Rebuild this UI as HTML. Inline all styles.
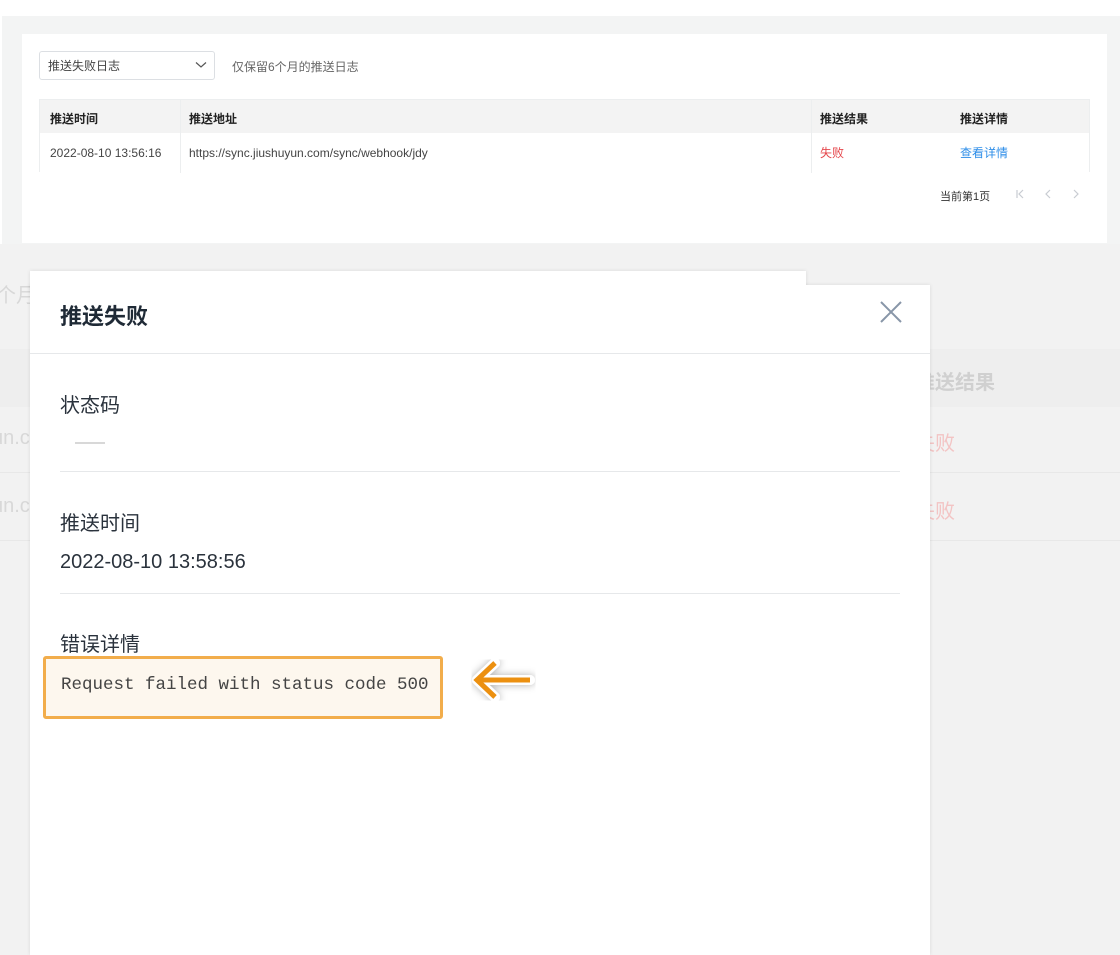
<!DOCTYPE html>
<html><head><meta charset="utf-8"><style>
*{margin:0;padding:0;box-sizing:border-box}
body{width:1120px;height:945px;overflow:hidden;background:#f2f2f2;font-family:"Liberation Sans","Noto Sans CJK SC",sans-serif;position:relative}
.abs{position:absolute}
</style></head><body>
<div class="abs" style="left:0;top:0;width:1120px;height:16px;background:#fff"></div>
<div class="abs" style="left:0;top:16px;width:1120px;height:228px;background:#f3f4f4"></div>
<div class="abs" style="left:0;top:16px;width:2px;height:228px;background:#fff"></div>
<div class="abs" style="left:22px;top:34px;width:1085px;height:209px;background:#fff"></div>
<div class="abs" style="left:39px;top:51px;width:176px;height:29px;border:1px solid #dcdfe3;border-radius:3px;font-size:12px;color:#444;padding:6px 8px;line-height:16px">推送失败日志
<svg class="abs" style="left:155px;top:9px" width="12" height="8"><path d="M1 1.5 6 6 11 1.5" stroke="#555" fill="none" stroke-width="1.2"/></svg></div>
<div class="abs" style="left:232px;top:58px;font-size:12px;color:#666">仅保留6个月的推送日志</div>
<div class="abs" style="left:39px;top:99px;width:1051px;height:73px;border:1px solid #eceeef;border-bottom:none">
 <div style="height:33px;background:#f3f3f3;position:relative;font-size:12px;font-weight:bold;color:#222">
  <span class="abs" style="left:10px;top:10px">推送时间</span><span class="abs" style="left:149px;top:10px">推送地址</span><span class="abs" style="left:780px;top:10px">推送结果</span><span class="abs" style="left:920px;top:10px">推送详情</span>
 </div>
 <div style="position:relative;font-size:12px;color:#444;height:39px;line-height:14px">
  <span class="abs" style="left:10px;top:13px">2022-08-10 13:56:16</span><span class="abs" style="left:149px;top:13px">https://sync.jiushuyun.com/sync/webhook/jdy</span><span class="abs" style="left:780px;top:13px;color:#e5484d">失败</span><span class="abs" style="left:920px;top:13px;color:#2e8ee8">查看详情</span>
 </div>
 <div class="abs" style="left:140px;top:0;width:1px;height:73px;background:#eceeef"></div>
 <div class="abs" style="left:771px;top:0;width:1px;height:73px;background:#eceeef"></div>
</div>
<div class="abs" style="left:940px;top:188px;font-size:11px;color:#333">当前第1页</div>
<svg class="abs" style="left:1014px;top:188px" width="70" height="12"><path d="M3 2V10M9 2 5 6 9 10M36 2 32 6 36 10M60 2 64 6 60 10" stroke="#c8ccd2" fill="none" stroke-width="1.2"/></svg>
<!-- ghost bg -->
<div class="abs" style="left:-4px;top:279px;font-size:20px;color:#d8d8d8">个月</div>
<div class="abs" style="left:0;top:349px;width:1120px;height:58px;background:#eeeeee"></div>
<div class="abs" style="left:0;top:472px;width:1120px;height:1px;background:#e8e8e8"></div>
<div class="abs" style="left:0;top:540px;width:1120px;height:1px;background:#e8e8e8"></div>
<div class="abs" style="left:-8px;top:427px;font-size:20px;color:#d8d8d8">un.c</div>
<div class="abs" style="left:-8px;top:495px;font-size:20px;color:#d8d8d8">un.c</div>
<div class="abs" style="left:915px;top:366px;font-size:20px;font-weight:bold;color:#d0d0d0">推送结果</div>
<div class="abs" style="left:915px;top:427px;font-size:20px;color:#f3c4c4">失败</div>
<div class="abs" style="left:915px;top:495px;font-size:20px;color:#f3c4c4">失败</div>
<!-- modal -->
<div class="abs" style="left:30px;top:271px;width:776px;height:20px;background:#fff;box-shadow:0 0 4px rgba(0,0,0,.1)"></div>
<div class="abs" style="left:30px;top:285px;width:900px;height:670px;background:#fff;box-shadow:0 0 4px rgba(0,0,0,.1)"></div>
<div class="abs" style="left:30px;top:271px;width:776px;height:30px;background:#fff"></div>
<div class="abs" style="left:60px;top:299px;font-size:22px;font-weight:bold;color:#1f2a36">推送失败</div>
<svg class="abs" style="left:879px;top:300px" width="24" height="24"><path d="M2 2 22 22M22 2 2 22" stroke="#8896a8" stroke-width="2"/></svg>
<div class="abs" style="left:30px;top:353px;width:900px;height:1px;background:#e6e8ea"></div>
<div class="abs" style="left:60px;top:389px;font-size:20px;color:#2a323c">状态码</div>
<div class="abs" style="left:75px;top:442px;width:30px;height:2px;background:#d8d8d8"></div>
<div class="abs" style="left:60px;top:471px;width:840px;height:1px;background:#e6e8ea"></div>
<div class="abs" style="left:60px;top:507px;font-size:20px;color:#2a323c">推送时间</div>
<div class="abs" style="left:60px;top:551px;font-size:20px;color:#2a323c">2022-08-10 13:58:56</div>
<div class="abs" style="left:60px;top:593px;width:840px;height:1px;background:#e6e8ea"></div>
<div class="abs" style="left:60px;top:628px;font-size:20px;color:#2a323c">错误详情</div>
<div class="abs" style="left:43px;top:656px;width:400px;height:63px;border:3px solid #f2ad4b;border-radius:3px;background:#fdf7ee;font-family:'Liberation Mono',monospace;font-size:17.5px;color:#444;padding:16px 0 0 15px">Request failed with status code 500</div>
<svg class="abs" style="left:462px;top:650px" width="80" height="60"><defs><filter id="f"><feDropShadow dx="0" dy="0" stdDeviation="4" flood-opacity=".3"/></filter></defs>
<g filter="url(#f)"><path d="M68 30H18M33 13 15 30 33 47" stroke="#fff" stroke-width="10" fill="none" stroke-linecap="round" stroke-linejoin="round"/></g>
<path d="M68 30H18M33 13 15 30 33 47" stroke="#ec9010" stroke-width="5" fill="none" stroke-linejoin="miter"/></svg>
</body></html>
